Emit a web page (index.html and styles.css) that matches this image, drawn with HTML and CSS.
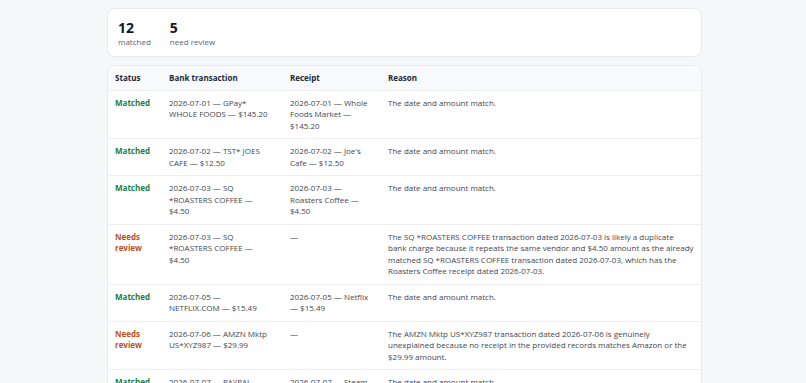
FILE: index.html
```html
<!DOCTYPE html>
<html lang="en">
<head>
<meta charset="utf-8">
<title>Reconciliation</title>
<link rel="stylesheet" href="styles.css">
</head>
<body>
<main class="wrap">
  <section class="card summary">
    <div class="stat"><div class="num">12</div><div class="lbl">matched</div></div>
    <div class="stat"><div class="num">5</div><div class="lbl">need review</div></div>
  </section>
  <section class="card tablecard">
    <table class="tbl">
      <colgroup>
        <col class="c-status"><col class="c-bank"><col class="c-receipt"><col class="c-reason">
      </colgroup>
      <thead>
        <tr><th>Status</th><th>Bank transaction</th><th>Receipt</th><th>Reason</th></tr>
      </thead>
      <tbody>
        <tr><td class="st ok">Matched</td><td class="bank">2026-07-01 — GPay* WHOLE FOODS — $145.20</td><td>2026-07-01 — Whole Foods Market — $145.20</td><td>The date and amount match.</td></tr>
        <tr><td class="st ok">Matched</td><td class="bank">2026-07-02 — TST* JOES CAFE — $12.50</td><td>2026-07-02 — Joe's Cafe — $12.50</td><td>The date and amount match.</td></tr>
        <tr><td class="st ok">Matched</td><td class="bank">2026-07-03 — SQ *ROASTERS COFFEE — $4.50</td><td>2026-07-03 — Roasters Coffee — $4.50</td><td>The date and amount match.</td></tr>
        <tr><td class="st rev">Needs review</td><td class="bank">2026-07-03 — SQ *ROASTERS COFFEE — $4.50</td><td>—</td><td>The SQ *ROASTERS COFFEE transaction dated 2026-07-03 is likely a duplicate bank charge because it repeats the same vendor and $4.50 amount as the already matched SQ *ROASTERS COFFEE transaction dated 2026-07-03, which has the Roasters Coffee receipt dated 2026-07-03.</td></tr>
        <tr><td class="st ok">Matched</td><td class="bank">2026-07-05 — NETFLIX.COM — $15.49</td><td>2026-07-05 — Netflix — $15.49</td><td>The date and amount match.</td></tr>
        <tr><td class="st rev">Needs review</td><td class="bank">2026-07-06 — AMZN Mktp US*XYZ987 — $29.99</td><td>—</td><td>The AMZN Mktp US*XYZ987 transaction dated 2026-07-06 is genuinely unexplained because no receipt in the provided records matches Amazon or the $29.99 amount.</td></tr>
        <tr><td class="st ok">Matched</td><td class="bank">2026-07-07 — PAYPAL *STEAM — $19.99</td><td>2026-07-07 — Steam — $19.99</td><td>The date and amount match.</td></tr>
      </tbody>
    </table>
  </section>
</main>
</body>
</html>
```

FILE: styles.css
```css
* { box-sizing: border-box; }
html, body { margin: 0; padding: 0; }
body {
  background: #f6f7f9;
  font-family: "Open Sans", "Noto Sans", sans-serif;
  font-size: 8px;
  line-height: 11.5px;
  color: #3f4754;
}
.wrap {
  width: 595px;
  margin: 8px auto 0 107px;
  display: flex;
  flex-direction: column;
  gap: 8px;
}
.card {
  background: #fff;
  border: 1px solid #e8eaee;
  border-radius: 8px;
}
.summary {
  display: flex;
  gap: 19px;
  padding: 10px 10px 8px;
}
.num {
  font-size: 14px;
  font-weight: 700;
  color: #111827;
  line-height: 17px;
}
.lbl {
  color: #5b6472;
  font-size: 8px;
  line-height: 12px;
}
.tablecard { overflow: hidden; }
.tbl {
  width: 100%;
  border-collapse: collapse;
  table-layout: fixed;
}
.c-status { width: 54px; }
.c-bank { width: 121px; }
.c-receipt { width: 98px; }
.tbl th {
  text-align: left;
  font-weight: 700;
  color: #1f2937;
  background: #f9fafb;
  padding: 6px 7px;
  border-bottom: 1px solid #eceef1;
}
.tbl td {
  vertical-align: top;
  padding: 6px 7px 7px;
  border-bottom: 1px solid #eceef1;
}
.tbl td.bank { padding-right: 11px; }
.st { font-weight: 700; }
.ok { color: #1a7f45; }
.rev { color: #c0501a; }
```
